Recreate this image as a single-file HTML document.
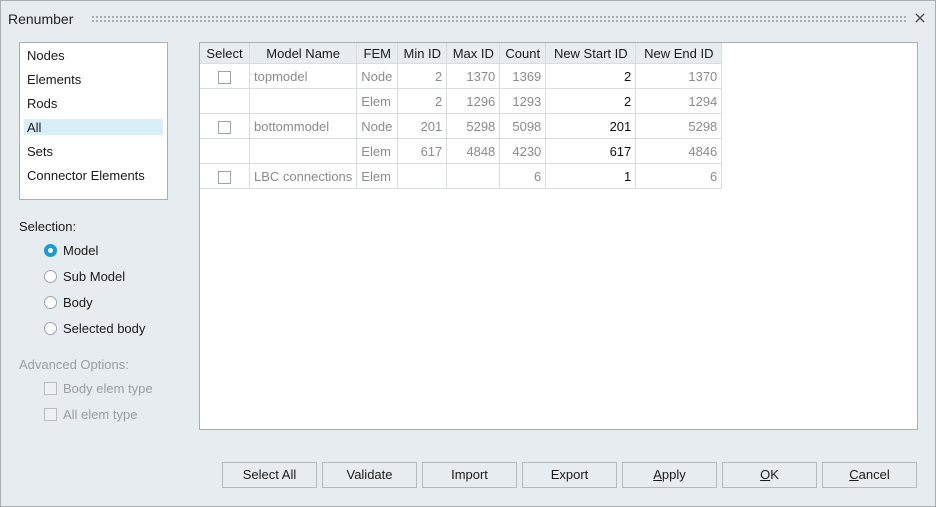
<!DOCTYPE html>
<html><head><style>
body{margin:0;width:936px;height:507px;background:#e6ecf0;font-family:"Liberation Sans",sans-serif;font-size:13px;color:#1a1a1a;overflow:hidden;position:relative}
.frame{position:absolute;left:0;top:0;width:934px;height:505px;border:1px solid #a9afb3}
.abs{position:absolute}
.title{left:8px;top:11px;font-size:14px;color:#222}
.dots{left:91px;top:15px;width:815px;height:8px;background-image:radial-gradient(circle,#959a9f 0.8px,transparent 1px);background-size:4px 4px}
.list{left:19px;top:42px;width:147px;height:156px;background:#fff;border:1px solid #a9afb3}
.list div{position:absolute;left:7px}
.tbl{left:199px;top:42px;width:717px;height:386px;background:#fff;border:1px solid #a9afb3}
table{border-collapse:collapse;position:absolute;left:0;top:0}
td,th{border:1px solid #d9dde0;padding:0 4px;height:24px;color:#8c8c8c;font-weight:normal;white-space:nowrap}
th{background:#e6ecf0;color:#1a1a1a;height:20px;border-top:none}
tr td:first-child,tr th:first-child{border-left:none}
.r{text-align:right}.b{color:#111}
.cb{display:inline-block;width:11px;height:11px;border:1px solid #a0a4a8;background:#fff;vertical-align:middle}
.radio{position:absolute;left:44px;width:11px;height:11px;border:1px solid #a0a4a8;border-radius:50%;background:#fff}
.lbl{position:absolute;left:63px}
.btn{position:absolute;top:462px;width:93px;height:24px;border:1px solid #b4b9bd;background:#e6ecf0;text-align:center;line-height:24px;font-size:13px}
</style></head><body>
<div class="frame"></div>
<div class="abs title">Renumber</div>
<div class="abs dots"></div>
<svg class="abs" style="left:915px;top:13px" width="10" height="10" viewBox="0 0 10 10"><path d="M1 1L9 9M9 1L1 9" stroke="#444" stroke-width="1.3"/></svg>
<div class="abs list">
<div style="top:5px">Nodes</div>
<div style="top:29px">Elements</div>
<div style="top:53px">Rods</div>
<div style="top:76px;left:4px;width:139px;height:16px;background:#d8eef9"></div>
<div style="top:77px">All</div>
<div style="top:101px">Sets</div>
<div style="top:125px">Connector Elements</div>
</div>
<div class="abs" style="left:19px;top:219px">Selection:</div>
<div class="radio" style="top:244px;border:1px solid #1a9ad6;background:#1a9ad6"><div style="position:absolute;left:3px;top:3px;width:5px;height:5px;border-radius:50%;background:#fff"></div></div>
<div class="lbl" style="top:243px">Model</div>
<div class="radio" style="top:270px"></div><div class="lbl" style="top:269px">Sub Model</div>
<div class="radio" style="top:296px"></div><div class="lbl" style="top:295px">Body</div>
<div class="radio" style="top:322px"></div><div class="lbl" style="top:321px">Selected body</div>
<div class="abs" style="left:19px;top:357px;color:#9a9ea2">Advanced Options:</div>
<div class="abs" style="left:44px;top:382px;width:11px;height:11px;border:1px solid #b8bcc0;background:#eef1f3"></div>
<div class="lbl" style="top:381px;color:#9a9ea2">Body elem type</div>
<div class="abs" style="left:44px;top:408px;width:11px;height:11px;border:1px solid #b8bcc0;background:#eef1f3"></div>
<div class="lbl" style="top:407px;color:#9a9ea2">All elem type</div>
<div class="abs tbl">
<table>
<tr><th style="width:41px">Select</th><th style="width:98px">Model Name</th><th style="width:32px">FEM</th><th style="width:40px">Min ID</th><th style="width:44px">Max ID</th><th style="width:37px">Count</th><th style="width:81px">New Start ID</th><th style="width:77px">New End ID</th></tr>
<tr><td style="text-align:center"><span class="cb"></span></td><td>topmodel</td><td>Node</td><td class="r">2</td><td class="r">1370</td><td class="r">1369</td><td class="r b">2</td><td class="r">1370</td></tr>
<tr><td></td><td></td><td>Elem</td><td class="r">2</td><td class="r">1296</td><td class="r">1293</td><td class="r b">2</td><td class="r">1294</td></tr>
<tr><td style="text-align:center"><span class="cb"></span></td><td>bottommodel</td><td>Node</td><td class="r">201</td><td class="r">5298</td><td class="r">5098</td><td class="r b">201</td><td class="r">5298</td></tr>
<tr><td></td><td></td><td>Elem</td><td class="r">617</td><td class="r">4848</td><td class="r">4230</td><td class="r b">617</td><td class="r">4846</td></tr>
<tr><td style="text-align:center"><span class="cb"></span></td><td>LBC connections</td><td>Elem</td><td></td><td></td><td class="r">6</td><td class="r b">1</td><td class="r">6</td></tr>
</table>
</div>
<div class="btn" style="left:222px">Select All</div>
<div class="btn" style="left:322px">Validate</div>
<div class="btn" style="left:422px">Import</div>
<div class="btn" style="left:522px">Export</div>
<div class="btn" style="left:622px"><u>A</u>pply</div>
<div class="btn" style="left:722px"><u>O</u>K</div>
<div class="btn" style="left:822px"><u>C</u>ancel</div>
</body></html>
